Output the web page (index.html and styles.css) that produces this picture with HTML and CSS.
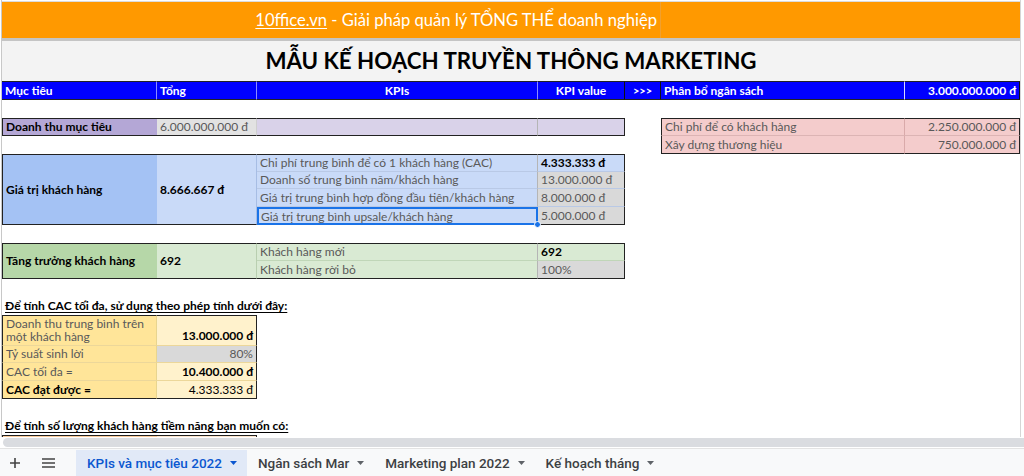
FILE: index.html
```html
<!DOCTYPE html>
<html lang="vi">
<head>
    <meta charset="UTF-8">
    <meta name="viewport" content="width=device-width, initial-scale=1.0">
    <title>Mẫu kế hoạch truyền thông Marketing</title>
    <link rel="stylesheet" href="styles.css">
</head>
<body>
<div class="page">
    <div class="frame">
        <div class="prev-row"></div>

        <div class="banner">
            <div class="banner-main"><span><u>10ffice.vn</u> - Giải pháp quản lý TỔNG THỂ doanh nghiệp</span></div>
            <div class="banner-rest"></div>
        </div>
        <div class="freeze"></div>

        <div class="title">MẪU KẾ HOẠCH TRUYỀN THÔNG MARKETING</div>

        <div class="sheet">
            <!-- header row -->
            <div class="c hd sep-lt">Mục tiêu</div>
            <div class="c hd sep-lt">Tổng</div>
            <div class="c hd sep-lt center">KPIs</div>
            <div class="c hd sep-dk center">KPI value</div>
            <div class="c hd sep-dk center arrows">&gt;&gt;&gt;</div>
            <div class="c hd sep-wh">Phân bổ ngân sách</div>
            <div class="c hd sep-dk right">3.000.000.000 đ</div>

            <div class="blank full"></div>

            <!-- doanh thu + ngân sách -->
            <div class="c rev-a t b l bold">Doanh thu mục tiêu</div>
            <div class="c rev-b t b grey-text">6.000.000.000 đ</div>
            <div class="c rev-c t b in-r"></div>
            <div class="c rev-c t b r"></div>
            <div class="blank"></div>
            <div class="c pink t l in-b pink-r grey-text">Chi phí để có khách hàng</div>
            <div class="c pink t r in-b right grey-text">2.250.000.000 đ</div>

            <div class="blank span5"></div>
            <div class="c pink b l pink-r grey-text">Xây dựng thương hiệu</div>
            <div class="c pink b r right grey-text">750.000.000 đ</div>

            <!-- giá trị khách hàng -->
            <div class="c blue-a t b l rows4 bold">Giá trị khách hàng</div>
            <div class="c blue-b t b rows4 blue-sep bold">8.666.667 đ</div>
            <div class="c blue-b t blue-in in-r grey-text">Chi phí trung bình để có 1 khách hàng (CAC)</div>
            <div class="c blue-b t blue-in r bold">4.333.333 đ</div>
            <div class="blank span3"></div>
            <div class="c blue-b blue-in in-r grey-text">Doanh số trung bình năm/khách hàng</div>
            <div class="c grey-cell blue-in r grey-text">13.000.000 đ</div>
            <div class="blank span3"></div>
            <div class="c blue-b blue-in in-r grey-text">Giá trị trung bình hợp đồng đầu tiên/khách hàng</div>
            <div class="c grey-cell blue-in r grey-text">8.000.000 đ</div>
            <div class="blank span3"></div>
            <div class="c blue-b b selected grey-text">Giá trị trung bình upsale/khách hàng</div>
            <div class="c grey-cell b r grey-text">5.000.000 đ</div>
            <div class="blank span3"></div>

            <div class="blank full"></div>

            <!-- tăng trưởng -->
            <div class="c green-a t b l rows2 bold">Tăng trưởng khách hàng</div>
            <div class="c green-b t b rows2 green-sep bold">692</div>
            <div class="c green-b t green-in in-r grey-text">Khách hàng mới</div>
            <div class="c green-b t green-in r bold">692</div>
            <div class="blank span3"></div>
            <div class="c green-b b in-r grey-text">Khách hàng rời bỏ</div>
            <div class="c grey-cell b r grey-text">100%</div>
            <div class="blank span3"></div>

            <div class="blank full"></div>

            <div class="c heading full">Để tính CAC tối đa, sử dụng theo phép tính dưới đây:</div>

            <!-- CAC -->
            <div class="c cac-a t l yel-in yel-sep grey-text wrap">Doanh thu trung bình trên một khách hàng</div>
            <div class="c cac-b t r yel-in right bold">13.000.000 đ</div>
            <div class="blank span5"></div>
            <div class="c cac-a l yel-in yel-sep grey-text">Tỷ suất sinh lời</div>
            <div class="c grey-cell r yel-in right grey-text">80%</div>
            <div class="blank span5"></div>
            <div class="c cac-a l yel-in yel-sep grey-text">CAC tối đa =</div>
            <div class="c cac-b r yel-in right bold">10.400.000 đ</div>
            <div class="blank span5"></div>
            <div class="c cac-a l b yel-sep bold">CAC đạt được =</div>
            <div class="c cac-b r b right">4.333.333 đ</div>
            <div class="blank span5"></div>

            <div class="blank full"></div>

            <div class="c heading full">Để tính số lượng khách hàng tiềm năng bạn muốn có:</div>

            <div class="c next-a t l"></div>
            <div class="c next-b t r"></div>
            <div class="blank span5"></div>
        </div>
    </div>

    <div class="hscroll"><div class="thumb"></div></div>

    <div class="tabs">
        <div class="tab-btn plus">
            <svg width="12" height="12" viewBox="0 0 12 12"><path d="M6 1v10M1 6h10" stroke="#444" stroke-width="1.6"/></svg>
        </div>
        <div class="tab-btn menu">
            <svg width="13" height="10" viewBox="0 0 13 10"><path d="M0 1h13M0 5h13M0 9h13" stroke="#444" stroke-width="1.4"/></svg>
        </div>
        <div class="tab active">KPIs và mục tiêu 2022 <svg class="caret" width="7" height="4" viewBox="0 0 7 4"><path d="M0 0h7L3.5 4z"/></svg></div>
        <div class="tab">Ngân sách Mar <svg class="caret" width="7" height="4" viewBox="0 0 7 4"><path d="M0 0h7L3.5 4z"/></svg></div>
        <div class="tab">Marketing plan 2022 <svg class="caret" width="7" height="4" viewBox="0 0 7 4"><path d="M0 0h7L3.5 4z"/></svg></div>
        <div class="tab">Kế hoạch tháng <svg class="caret" width="7" height="4" viewBox="0 0 7 4"><path d="M0 0h7L3.5 4z"/></svg></div>
    </div>
</div>
</body>
</html>
```

FILE: styles.css
```css
body {
    margin: 0;
    background-color: #fff;
    font-family: Lato, "Noto Sans", sans-serif;
}

.page {
    width: 1024px;
    height: 476px;
    overflow: hidden;
    display: flex;
    flex-direction: column;
}

.frame {
    margin-left: 1px;
    width: 1018px;
    border-left: 1px solid #c8c8c8;
    border-right: 1px solid #d6d6d6;
}

.prev-row {
    height: 1px;
    border-bottom: 1px solid #dcdcdc;
}

.banner {
    height: 36px;
    display: grid;
    grid-template-columns: 659px 1fr;
    background-color: #ff9900;
}

.banner-main {
    display: flex;
    align-items: center;
    justify-content: flex-end;
    padding-right: 3px;
    color: #fff;
    font-size: 16.6px;
    border-right: 1px solid #f0a030;
}

.banner-main u {
    text-underline-offset: 2px;
    text-decoration-thickness: 1px;
}

.freeze {
    height: 3px;
    background-color: #c4c4c4;
}

.title {
    height: 40px;
    background-color: #f3f3f3;
    display: flex;
    align-items: center;
    justify-content: center;
    font-size: 22.3px;
    font-weight: bold;
    color: #000;
    padding-bottom: 2px;
    box-sizing: border-box;
}

/* spreadsheet grid */
.sheet {
    height: 356px;
    overflow: hidden;
    display: grid;
    grid-template-columns: 155px 100px 281px 87px 36px 244px 115px;
    grid-template-rows: 19px repeat(12, 17.875px) 31px repeat(6, 17.875px);
}

.c {
    box-sizing: border-box;
    display: flex;
    align-items: center;
    padding: 0 3px;
    font-size: 12px;
    color: #000;
    white-space: nowrap;
    overflow: hidden;
    min-width: 0;
}

.blank { min-width: 0; }
.full { grid-column: 1 / -1; }
.span3 { grid-column: span 3; }
.span5 { grid-column: span 5; }
.rows2 { grid-row: span 2; }
.rows4 { grid-row: span 4; }

.center { justify-content: center; }
.right { justify-content: flex-end; }
.bold { font-weight: bold; }
.grey-text { color: #595959; }

/* dark table edges */
.t { border-top: 1px solid #222; }
.b { border-bottom: 1px solid #222; }
.l { border-left: 1px solid #222; }
.r { border-right: 1px solid #222; }
.in-r { border-right: 1px solid #b5b5b5; }

/* header */
.hd {
    background-color: #0000ff;
    color: #fff;
    font-weight: bold;
    border-top: 1px solid #222;
    border-bottom: 1px solid #222;
}
.sep-lt { border-right: 1px solid #8c8cff; }
.sep-dk { border-right: 1px solid #111; }
.sep-wh { border-right: 1px solid #d8d8ff; }
.arrows { font-size: 11px; }

/* doanh thu */
.rev-a { background-color: #b4a7d6; }
.rev-b { background-color: #e2e2e2; border-right: 1px solid #cfcfcf; }
.rev-c { background-color: #d9d2e9; }

/* ngân sách */
.pink { background-color: #f4cccc; }
.pink-r { border-right: 1px solid #d9aaaa; }
.in-b { border-bottom: 1px solid #dcb4b4; }

/* giá trị khách hàng */
.blue-a { background-color: #a4c2f4; }
.blue-b { background-color: #c9daf8; }
.blue-sep { border-right: 1px solid #a7bde4; }
.blue-in { border-bottom: 1px solid #b9c9e6; }
.grey-cell { background-color: #d9d9d9; }

.selected {
    position: relative;
    overflow: visible;
    border: 2px solid #1a73e8;
    padding-left: 2px;
}
.selected::after {
    content: "";
    position: absolute;
    right: -5px;
    bottom: -5px;
    width: 7px;
    height: 7px;
    border-radius: 50%;
    background-color: #1a73e8;
    border: 1px solid #fff;
    box-sizing: border-box;
}

/* tăng trưởng */
.green-a { background-color: #b6d7a8; }
.green-b { background-color: #d9ead3; }
.green-sep { border-right: 1px solid #b9cfb0; }
.green-in { border-bottom: 1px solid #c0d6b8; }

.heading {
    font-weight: bold;
    text-decoration: underline;
    text-underline-offset: 2px;
    padding-left: 3px;
}

/* CAC */
.cac-a { background-color: #ffe599; }
.cac-b { background-color: #fff2cc; }
.yel-in { border-bottom: 1px solid #ecd79a; }
.yel-sep { border-right: 1px solid #e8d58f; }
.wrap {
    white-space: normal;
    line-height: 13px;
    align-items: flex-end;
    padding-bottom: 2px;
}
.cac-b.t { align-items: flex-end; padding-bottom: 2px; }

.next-a { background-color: #f9cb9c; }
.next-b { background-color: #fce5cd; }

/* scrollbar + sheet tabs */
.hscroll {
    height: 12px;
    padding: 1px 0 0 3px;
    box-sizing: border-box;
    border-bottom: 1px solid #e3e3e3;
}
.thumb {
    height: 9px;
    background-color: #dadce0;
    border-radius: 5px 0 0 5px;
}

.tabs {
    flex: 1;
    display: flex;
    align-items: stretch;
    background-color: #f8f9fa;
    font-family: Roboto, "Noto Sans", sans-serif;
    font-size: 13.5px;
    color: #3c4043;
    padding-top: 1px;
}

.tab-btn {
    display: flex;
    align-items: center;
    justify-content: center;
}
.plus { width: 30px; }
.menu { width: 36px; margin-right: 10px; }

.tab {
    display: flex;
    align-items: center;
    gap: 8px;
    padding: 0 10px 0 11px;
    font-weight: 500;
}
.tab .caret { fill: #5f6368; }

.tab.active {
    background-color: #e1e9f7;
    color: #0b57d0;
}
.tab.active .caret { fill: #0b57d0; }
```
